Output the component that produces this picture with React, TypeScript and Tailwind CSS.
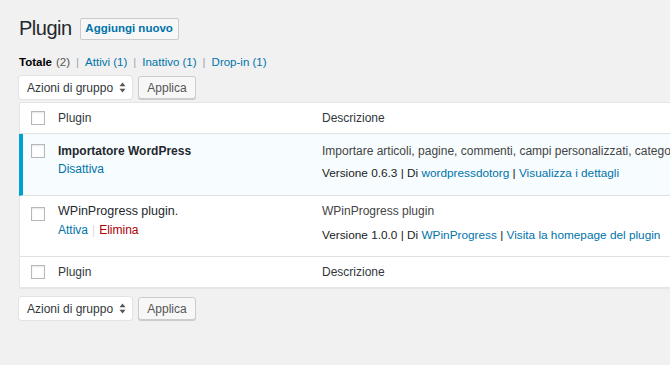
import React from "react";

const font = { fontFamily: '"Liberation Sans", Arial, sans-serif' };

function Checkbox() {
  return (
    <span className="block w-[14px] h-[14px] border border-[#b4b9be] bg-white shadow-[inset_0_1px_2px_rgba(0,0,0,0.1)]" />
  );
}

function Bulk() {
  return (
    <div className="flex items-center gap-[6px]">
      <div className="flex items-center justify-between w-[113px] h-[23px] bg-white rounded-[3px] shadow-[0_0_0_1px_#e3e3e3,0_1px_1px_rgba(0,0,0,0.06)] pl-[8px] pr-[6px] text-[12px] text-[#32373c] whitespace-nowrap">
        <span>Azioni di gruppo</span>
        <svg width="7" height="11" viewBox="0 0 7 11">
          <path d="M3.5 0.5 L6.5 4.3 L0.5 4.3 Z" fill="#555" />
          <path d="M3.5 10.5 L6.5 6.7 L0.5 6.7 Z" fill="#555" />
        </svg>
      </div>
      <div className="flex items-center justify-center w-[58px] h-[23px] bg-[#f7f7f7] border border-[#cccccc] rounded-[3px] shadow-[0_1px_0_#cccccc] text-[12px] text-[#555]">
        Applica
      </div>
    </div>
  );
}

export default function App() {
  return (
    <div style={font} className="w-[670px] h-[365px] overflow-hidden bg-[#f1f1f1] text-[#444] pl-[19px] pt-[15px]">
      <div className="flex items-center gap-[8px]">
        <h1 className="text-[20px] leading-[27px] tracking-[-0.5px] text-[#23282d]">Plugin</h1>
        <div className="flex items-center justify-center w-[99px] h-[22px] bg-[#f7f7f7] border border-[#cccccc] rounded-[2px] text-[11.5px] font-bold text-[#0073aa]">
          Aggiungi nuovo
        </div>
      </div>
      <div className="mt-[11px] leading-[18px] text-[11.5px] text-[#555] flex items-center">
        <span className="font-bold text-[#000]">Totale</span>
        <span className="ml-[4px]">(2)</span>
        <span className="mx-[6px] text-[#a0a5aa]">|</span>
        <span className="text-[#0073aa]">Attivi (1)</span>
        <span className="mx-[6px] text-[#a0a5aa]">|</span>
        <span className="text-[#0073aa]">Inattivo (1)</span>
        <span className="mx-[6px] text-[#a0a5aa]">|</span>
        <span className="text-[#0073aa]">Drop-in (1)</span>
      </div>
      <div className="mt-[5px]">
        <Bulk />
      </div>
      <div className="mt-[3px] w-[900px] bg-white border border-[#e5e5e5] shadow-[0_1px_1px_rgba(0,0,0,0.04)] text-[12px]">
        <div className="flex items-center h-[31px] border-b border-[#e1e1e1]">
          <div className="w-[38px] pl-[11px]"><Checkbox /></div>
          <div className="w-[264px] text-[#32373c]">Plugin</div>
          <div className="flex-1 text-[#32373c]">Descrizione</div>
        </div>
        <div className="flex h-[62px] border-b border-[#e1e1e1] bg-[#f7fcfe] border-l-[4px] border-l-[#00a0d2] -ml-px">
          <div className="w-[35px] pl-[8px] pt-[10px]"><Checkbox /></div>
          <div className="w-[264px] pt-[8px]">
            <div className="font-bold text-[#23282d] leading-[18px]">Importatore WordPress</div>
            <div className="text-[#0073aa] leading-[18px]">Disattiva</div>
          </div>
          <div className="flex-1 pt-[8px]">
            <div className="leading-[18px] text-[#444] whitespace-nowrap">Importare articoli, pagine, commenti, campi personalizzati, categorie e tag da un file di esportazione WordPress.</div>
            <div className="leading-[18px] mt-[4px] text-[#222] text-[11.8px]">
              Versione 0.6.3 | Di <span className="text-[#0073aa]">wordpressdotorg</span> | <span className="text-[#0073aa]">Visualizza i dettagli</span>
            </div>
          </div>
        </div>
        <div className="flex h-[61px] border-b border-[#e1e1e1]">
          <div className="w-[38px] pl-[11px] pt-[11px]"><Checkbox /></div>
          <div className="w-[264px] pt-[6px]">
            <div className="text-[#23282d] leading-[18px] text-[12.5px]">WPinProgress plugin.</div>
            <div className="leading-[18px] mt-[1px]">
              <span className="text-[#0073aa]">Attiva</span>
              <span className="text-[#ddd] mx-[4px]">|</span>
              <span className="text-[#a00]">Elimina</span>
            </div>
          </div>
          <div className="flex-1 pt-[6px]">
            <div className="leading-[18px] text-[#444]">WPinProgress plugin</div>
            <div className="leading-[18px] mt-[6px] text-[#222] text-[11.8px]">
              Versione 1.0.0 | Di <span className="text-[#0073aa]">WPinProgress</span> | <span className="text-[#0073aa]">Visita la homepage del plugin</span>
            </div>
          </div>
        </div>
        <div className="flex items-center h-[30px]">
          <div className="w-[38px] pl-[11px]"><Checkbox /></div>
          <div className="w-[264px] text-[#32373c]">Plugin</div>
          <div className="flex-1 text-[#32373c]">Descrizione</div>
        </div>
      </div>
      <div className="mt-[9px]">
        <Bulk />
      </div>
    </div>
  );
}
